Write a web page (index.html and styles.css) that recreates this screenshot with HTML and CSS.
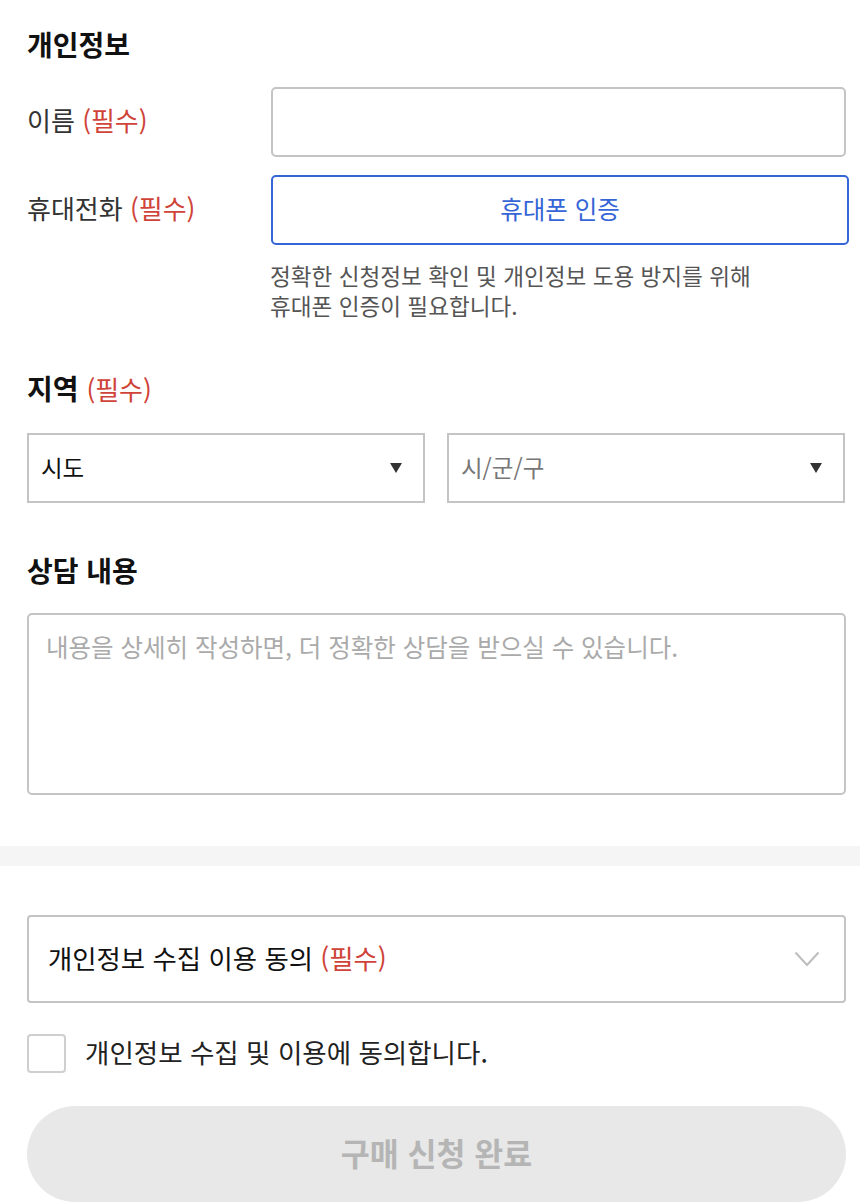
FILE: index.html
```html
<!DOCTYPE html>
<html lang="ko">
<head>
<meta charset="utf-8">
<title>구매 신청</title>
<link rel="stylesheet" href="styles.css">
</head>
<body>
<div class="page">
  <section class="sec">
    <h2 class="title">개인정보</h2>
    <div class="row row-first">
      <div class="label">이름 <span class="req">(필수)</span></div>
      <div class="input"></div>
    </div>
    <div class="row">
      <div class="label">휴대전화 <span class="req">(필수)</span></div>
      <div class="auth-btn">휴대폰 인증</div>
    </div>
    <p class="help">정확한 신청정보 확인 및 개인정보 도용 방지를 위해<br>휴대폰 인증이 필요합니다.</p>
  </section>

  <section class="sec sec-region">
    <h2 class="title">지역 <span class="req">(필수)</span></h2>
    <div class="selects">
      <div class="select"><span class="sel-text">시도</span><span class="caret"></span></div>
      <div class="select"><span class="sel-text placeholder">시/군/구</span><span class="caret"></span></div>
    </div>
  </section>

  <section class="sec sec-memo">
    <h2 class="title">상담 내용</h2>
    <div class="textarea"><span class="placeholder-lg">내용을 상세히 작성하면, 더 정확한 상담을 받으실 수 있습니다.</span></div>
  </section>
</div>

<div class="band"></div>

<div class="page page-bottom">
  <div class="accordion">
    <span class="acc-text">개인정보 수집 이용 동의 <span class="req">(필수)</span></span>
    <svg class="chev" width="26" height="16" viewBox="0 0 26 16"><path d="M1.5 1.5 L13 14 L24.5 1.5" fill="none" stroke="#bdbdbd" stroke-width="2"/></svg>
  </div>
  <label class="agree">
    <span class="check"></span>
    <span class="agree-text">개인정보 수집 및 이용에 동의합니다.</span>
  </label>
  <div class="submit">구매 신청 완료</div>
</div>
</body>
</html>
```

FILE: styles.css
```css
html, body {
  margin: 0;
  padding: 0;
  background: #fff;
}
body {
  font-family: "Noto Sans CJK KR", "Noto Sans", sans-serif;
  color: #222;
}
.page {
  padding: 26px 14px 0 27px;
}
.title {
  margin: 0;
  height: 36px;
  font-size: 28px;
  line-height: 36px;
  font-weight: 700;
  color: #111;
}
.req {
  color: #cf4339;
  font-weight: 400;
}
.title .req {
  font-size: 26px;
}
.row {
  display: grid;
  grid-template-columns: 244px 1fr;
  align-items: center;
  margin-top: 18px;
}
.row-first {
  margin-top: 25px;
}
.label {
  font-size: 26px;
  line-height: 34px;
  padding-bottom: 4px;
  color: #333;
}
.input {
  height: 70px;
  box-sizing: border-box;
  border: 2px solid #c4c4c4;
  border-radius: 5px;
}
.auth-btn {
  height: 70px;
  box-sizing: border-box;
  border: 2px solid #3565d6;
  border-radius: 5px;
  margin-right: -3px;
  display: flex;
  align-items: center;
  justify-content: center;
  color: #3565d6;
  font-size: 24.5px;
  padding-bottom: 3px;
}
.help {
  margin: 16px 0 0 243px;
  font-size: 22.6px;
  line-height: 30px;
  color: #555;
}
.sec-region {
  margin-top: 49px;
}
.selects {
  margin-top: 27px;
  display: grid;
  grid-template-columns: 1fr 1fr;
  gap: 22px;
  padding-right: 1px;
}
.select {
  height: 70px;
  box-sizing: border-box;
  border: 2px solid #c4c4c4;
  display: flex;
  align-items: center;
  justify-content: space-between;
  padding: 0 21px 0 12px;
  font-size: 23.5px;
  color: #111;
}
.sel-text {
  padding-bottom: 3px;
}
.placeholder {
  color: #777;
}
.caret {
  width: 0;
  height: 0;
  border-left: 6px solid transparent;
  border-right: 6px solid transparent;
  border-top: 10px solid #333;
}
.sec-memo {
  margin-top: 49px;
}
.textarea {
  margin-top: 25px;
  height: 182px;
  box-sizing: border-box;
  border: 2px solid #c4c4c4;
  border-radius: 5px;
  padding: 16px 17px;
}
.placeholder-lg {
  font-size: 24.5px;
  line-height: 32px;
  color: #aaa;
}
.band {
  margin-top: 51px;
  height: 20px;
  background: #f5f5f5;
}
.page-bottom {
  padding-top: 49px;
}
.accordion {
  height: 88px;
  box-sizing: border-box;
  border: 2px solid #c4c4c4;
  border-radius: 4px;
  display: flex;
  align-items: center;
  justify-content: space-between;
  padding: 0 24px 0 19px;
}
.acc-text {
  font-size: 26.4px;
  color: #111;
  padding-bottom: 3px;
}
.chev {
  display: block;
}
.agree {
  margin-top: 31px;
  height: 39px;
  display: flex;
  align-items: center;
  gap: 19px;
}
.check {
  width: 39px;
  height: 39px;
  box-sizing: border-box;
  border: 2px solid #cfcfcf;
  border-radius: 4px;
  background: #fff;
  flex: none;
}
.agree-text {
  font-size: 26.5px;
  line-height: 34px;
  color: #222;
  padding-bottom: 3px;
}
.submit {
  margin-top: 33px;
  height: 96px;
  border-radius: 48px;
  background: #e8e8e8;
  color: #b5b5b5;
  font-size: 31.5px;
  font-weight: 700;
  display: flex;
  align-items: center;
  justify-content: center;
  padding-bottom: 4px;
  box-sizing: border-box;
}
```
